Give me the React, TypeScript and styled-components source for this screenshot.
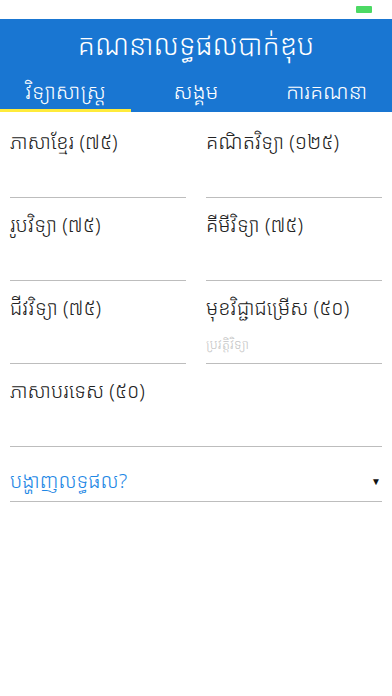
import React from "react";
import styled, { createGlobalStyle } from "styled-components";

const Global = createGlobalStyle`
  html, body { margin: 0; padding: 0; background: #fff; }
  body { font-family: "Noto Sans", "Noto Sans Khmer", "Khmer OS", sans-serif; }
`;

const Page = styled.div`
  width: 392px;
  min-height: 696px;
  background: #fff;
  display: flex;
  flex-direction: column;
`;

const StatusBar = styled.div`
  height: 19px;
  display: flex;
  justify-content: flex-end;
  align-items: flex-start;
  padding-right: 20px;
  background: #fff;
`;

const Battery = styled.div`
  width: 16px;
  height: 7px;
  margin-top: 6px;
  background: #4cd964;
  border-radius: 1px;
`;

const Header = styled.header`
  background: #1976d2;
  display: flex;
  flex-direction: column;
`;

const Title = styled.h1`
  margin: 0;
  height: 54px;
  padding-bottom: 4px;
  box-sizing: border-box;
  display: flex;
  align-items: center;
  justify-content: center;
  color: #fff;
  font-weight: 300;
  font-size: 28px;
`;

const Tabs = styled.nav`
  display: grid;
  grid-template-columns: 131px 130px 131px;
`;

const Tab = styled.div<{ $active?: boolean }>`
  height: 39px;
  display: flex;
  align-items: center;
  justify-content: center;
  color: #fff;
  font-size: 21px;
  font-weight: 300;
  padding-bottom: 1px;
  box-sizing: border-box;
  border-bottom: 3px solid ${(p) => (p.$active ? "#ffeb3b" : "transparent")};
`;

const Form = styled.div`
  display: grid;
  grid-template-columns: 1fr 1fr;
  column-gap: 20px;
  padding: 3px 10px 0;
`;

const Field = styled.div<{ $wide?: boolean }>`
  grid-column: ${(p) => (p.$wide ? "1 / span 2" : "auto")};
  height: 83px;
  padding-top: 7px;
  display: flex;
  flex-direction: column;
  border-bottom: 1px solid #bdbdbd;
  box-sizing: border-box;
`;

const Label = styled.div`
  font-size: 20px;
  font-weight: 300;
  color: #222;
  line-height: 40px;
  height: 40px;
`;

const Placeholder = styled.div`
  font-size: 13px;
  font-weight: 300;
  color: #c4c4c4;
  margin-top: 7px;
`;

const Select = styled.div`
  margin: 13px 10px 0;
  height: 42px;
  display: flex;
  align-items: center;
  justify-content: space-between;
  border-bottom: 1px solid #bdbdbd;
  box-sizing: border-box;
`;

const SelectText = styled.span`
  color: #1e88e5;
  font-size: 20px;
  font-weight: 300;
`;

const Arrow = styled.span`
  font-size: 10px;
  color: #111;
  margin-right: 1px;
`;

const fields: { label: string; placeholder?: string; wide?: boolean }[] = [
  { label: "ភាសាខ្មែរ (៧៥)" },
  { label: "គណិតវិទ្យា (១២៥)" },
  { label: "រូបវិទ្យា (៧៥)" },
  { label: "គីមីវិទ្យា (៧៥)" },
  { label: "ជីវវិទ្យា (៧៥)" },
  { label: "មុខវិជ្ជាជម្រើស (៥០)", placeholder: "ប្រវត្តិវិទ្យា" },
  { label: "ភាសាបរទេស (៥០)", wide: true },
];

export default function App() {
  return (
    <Page>
      <Global />
      <StatusBar>
        <Battery />
      </StatusBar>
      <Header>
        <Title>គណនាលទ្ធផលបាក់ឌុប</Title>
        <Tabs>
          <Tab $active>វិទ្យាសាស្ត្រ</Tab>
          <Tab>សង្គម</Tab>
          <Tab>ការគណនា</Tab>
        </Tabs>
      </Header>
      <Form>
        {fields.map((f) => (
          <Field key={f.label} $wide={f.wide}>
            <Label>{f.label}</Label>
            {f.placeholder && <Placeholder>{f.placeholder}</Placeholder>}
          </Field>
        ))}
      </Form>
      <Select>
        <SelectText>បង្ហាញលទ្ធផល?</SelectText>
        <Arrow>▼</Arrow>
      </Select>
    </Page>
  );
}
